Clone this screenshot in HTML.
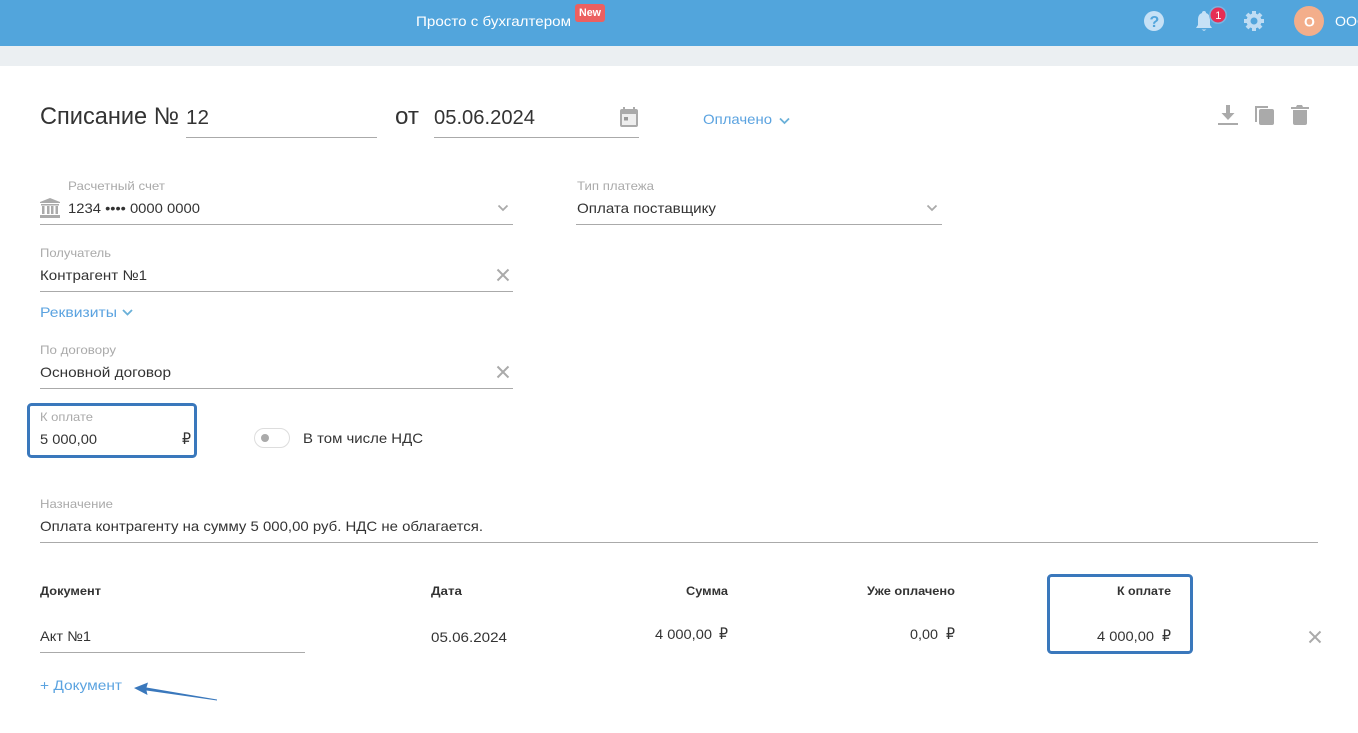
<!DOCTYPE html>
<html lang="ru"><head><meta charset="utf-8"><title>Списание</title>
<style>
html,body{margin:0;padding:0;background:#fff;width:1358px;height:733px;overflow:hidden}
svg{display:block}
text{font-family:"Liberation Sans",sans-serif;fill:#333;font-size:14px}
.l{font-size:12px;fill:#aaa}
.b{fill:#5ba3e0}
.h{font-size:12px;font-weight:bold}
.r{font-size:16px}
.ln{stroke:#aaa;stroke-width:1;fill:none}
.ch{stroke:#aaa;stroke-width:1.800;fill:none}
.cb{stroke:#6ab0d8;stroke-width:1.800;fill:none}
.x{stroke:#aaa;stroke-width:2;fill:none}
.bx{fill:none;stroke:#3a78bc;stroke-width:3}
</style></head><body>
<svg width="1358" height="733" viewBox="0 0 1358 733" xmlns="http://www.w3.org/2000/svg">
<rect width="1358" height="46" fill="#52a5dc"/>
<rect y="46" width="1358" height="20" fill="#ebeff2"/>
<text x="416" y="26" style="fill:#fff;font-size:14px" textLength="155" lengthAdjust="spacingAndGlyphs">Просто с бухгалтером</text>
<rect x="575" y="4" width="30" height="18" rx="3" fill="#ec6060"/>
<text x="579" y="16" style="fill:#fff;font-size:11px;font-weight:bold" textLength="22" lengthAdjust="spacingAndGlyphs">New</text>
<circle cx="1154" cy="21" r="10" fill="#c6e1f6"/>
<text x="1149.500" y="27" style="fill:#52a5dc;font-size:16px;font-weight:bold">?</text>
<path d="M1204 11a2 2 0 0 1 2 2c3 1 4 3.500 4 7v5l2 3h-16l2-3v-5c0-3.500 1-6 4-7a2 2 0 0 1 2-2zM1201.500 29.500h5l-2.500 1.500z" fill="#c6e1f6"/>
<circle cx="1218" cy="15" r="9" fill="#7ab4e0"/>
<circle cx="1218" cy="15" r="7.500" fill="#e62e55"/>
<text x="1215.300" y="19" style="fill:#fff;font-size:11px">1</text>
<circle cx="1254" cy="21" r="7.500" fill="#bfdcf3"/>
<path d="M1254 11v20M1244 21h20M1247 14l14 14M1261 14l-14 14" stroke="#bfdcf3" stroke-width="4"/>
<circle cx="1254" cy="21" r="3.500" fill="#52a5dc"/>
<circle cx="1309" cy="21" r="15" fill="#f3ae8b"/>
<text x="1304" y="26.500" style="fill:#fff;font-size:14px;font-weight:bold">О</text>
<text x="1335" y="26" style="fill:#fff;font-size:14px" textLength="33" lengthAdjust="spacingAndGlyphs">ООО</text>

<text x="40" y="124" style="font-size:24px" textLength="139" lengthAdjust="spacingAndGlyphs">Списание №</text>
<text x="186" y="124" style="font-size:20px" textLength="23" lengthAdjust="spacingAndGlyphs">12</text>
<path class="ln" d="M186 137.500H377"/>
<text x="395" y="124" style="font-size:24px" textLength="24" lengthAdjust="spacingAndGlyphs">от</text>
<text x="434" y="124" style="font-size:20px" textLength="101" lengthAdjust="spacingAndGlyphs">05.06.2024</text>
<path class="ln" d="M434 137.500H639"/>
<path fill-rule="evenodd" d="M623 107h2v2h8v-2h2v2h1a2 2 0 0 1 2 2v14a2 2 0 0 1-2 2h-14a2 2 0 0 1-2-2v-14a2 2 0 0 1 2-2h1zM622 114v11h14V114z" fill="#aaa"/>
<rect x="622" y="114" width="14" height="11" fill="#eee"/>
<rect x="624" y="117" width="4" height="3.500" fill="#999"/>
<text class="b" x="703" y="124" textLength="69" lengthAdjust="spacingAndGlyphs">Оплачено</text>
<path class="cb" d="M780 118.500l4.500 4.500 4.500-4.500"/>

<path d="M1226 105h4v8h4.500l-6.500 7-6.500-7h4.500zM1218 123h20v2h-20z" fill="#aaa"/>
<path d="M1255 122v-16h13v2h-11v14z" fill="#aaa"/>
<rect x="1259" y="109" width="15" height="16" rx="2" fill="#aaa"/>
<path d="M1291 107h5l1-2h5l1 2h6v2h-18z" fill="#aaa"/>
<path d="M1293 110h14v13a2 2 0 0 1-2 2h-10a2 2 0 0 1-2-2z" fill="#aaa"/>

<text class="l" x="68" y="190" textLength="97" lengthAdjust="spacingAndGlyphs">Расчетный счет</text>
<path d="M50 198l10 4v1h-20v-1zM41 204h18v1.500h-18zM42 206h2.500v8h-2.500zM47 206h2.500v8h-2.500zM51 206h2.500v8h-2.500zM55.500 206h2.500v8h-2.500zM40 215h20v3h-20z" fill="#aaa"/>
<text x="68" y="213" textLength="132" lengthAdjust="spacingAndGlyphs">1234 •••• 0000 0000</text>
<path class="ch" d="M498.500 205.500l4.500 4.500 4.500-4.500"/>
<path class="ln" d="M40 224.500H513"/>
<text class="l" x="577" y="190" textLength="77" lengthAdjust="spacingAndGlyphs">Тип платежа</text>
<text x="577" y="213" textLength="139" lengthAdjust="spacingAndGlyphs">Оплата поставщику</text>
<path class="ch" d="M927.500 205.500l4.500 4.500 4.500-4.500"/>
<path class="ln" d="M576 224.500H942"/>

<text class="l" x="40" y="257" textLength="71" lengthAdjust="spacingAndGlyphs">Получатель</text>
<text x="40" y="280" textLength="107" lengthAdjust="spacingAndGlyphs">Контрагент №1</text>
<path class="x" d="M497.500 269.500l11 11M508.500 269.500l-11 11"/>
<path class="ln" d="M40 291.500H513"/>
<text class="b" x="40" y="317" textLength="77" lengthAdjust="spacingAndGlyphs">Реквизиты</text>
<path class="cb" d="M123 310l4.500 4.500 4.500-4.500"/>
<text class="l" x="40" y="354" textLength="76" lengthAdjust="spacingAndGlyphs">По договору</text>
<text x="40" y="377" textLength="131" lengthAdjust="spacingAndGlyphs">Основной договор</text>
<path class="x" d="M497.500 366.500l11 11M508.500 366.500l-11 11"/>
<path class="ln" d="M40 388.500H513"/>

<rect class="bx" x="28.500" y="404.500" width="167" height="52" rx="3"/>
<text class="l" x="40" y="421" textLength="53" lengthAdjust="spacingAndGlyphs">К оплате</text>
<text x="40" y="444" textLength="57" lengthAdjust="spacingAndGlyphs">5 000,00</text>
<text class="r" x="182" y="444" textLength="9" lengthAdjust="spacingAndGlyphs">₽</text>
<rect x="254.500" y="428.500" width="35" height="19" rx="9.500" fill="#fff" stroke="#ddd"/>
<circle cx="265" cy="438" r="4" fill="#aaa"/>
<text x="303" y="443" textLength="120" lengthAdjust="spacingAndGlyphs">В том числе НДС</text>

<text class="l" x="40" y="508" textLength="73" lengthAdjust="spacingAndGlyphs">Назначение</text>
<text x="40" y="531" textLength="443" lengthAdjust="spacingAndGlyphs">Оплата контрагенту на сумму 5 000,00 руб. НДС не облагается.</text>
<path class="ln" d="M40 542.500H1318"/>

<text class="h" x="40" y="595" textLength="61" lengthAdjust="spacingAndGlyphs">Документ</text>
<text class="h" x="431" y="595" textLength="31" lengthAdjust="spacingAndGlyphs">Дата</text>
<text class="h" x="686" y="595" textLength="42" lengthAdjust="spacingAndGlyphs">Сумма</text>
<text class="h" x="867" y="595" textLength="88" lengthAdjust="spacingAndGlyphs">Уже оплачено</text>
<rect class="bx" x="1048.500" y="575.500" width="143" height="77" rx="3"/>
<text class="h" x="1117" y="595" textLength="54" lengthAdjust="spacingAndGlyphs">К оплате</text>

<text x="40" y="641" textLength="51" lengthAdjust="spacingAndGlyphs">Акт №1</text>
<path class="ln" d="M40 652.500H305"/>
<text x="431" y="642" textLength="76" lengthAdjust="spacingAndGlyphs">05.06.2024</text>
<text x="655" y="639" textLength="57" lengthAdjust="spacingAndGlyphs">4 000,00</text>
<text class="r" x="719" y="639" textLength="9" lengthAdjust="spacingAndGlyphs">₽</text>
<text x="910" y="639" textLength="28" lengthAdjust="spacingAndGlyphs">0,00</text>
<text class="r" x="946" y="639" textLength="9" lengthAdjust="spacingAndGlyphs">₽</text>
<text x="1097" y="641" textLength="57" lengthAdjust="spacingAndGlyphs">4 000,00</text>
<text class="r" x="1162" y="641" textLength="9" lengthAdjust="spacingAndGlyphs">₽</text>
<path class="x" d="M1309.500 631.500l11 11M1320.500 631.500l-11 11"/>

<text class="b" x="40" y="690" textLength="82" lengthAdjust="spacingAndGlyphs">+ Документ</text>
<path d="M134 688L148 682.500 146.500 687.500 217 699.500 217 700.500 146.500 690.500 147.500 695z" fill="#3a78bc"/>
</svg>
</body></html>
